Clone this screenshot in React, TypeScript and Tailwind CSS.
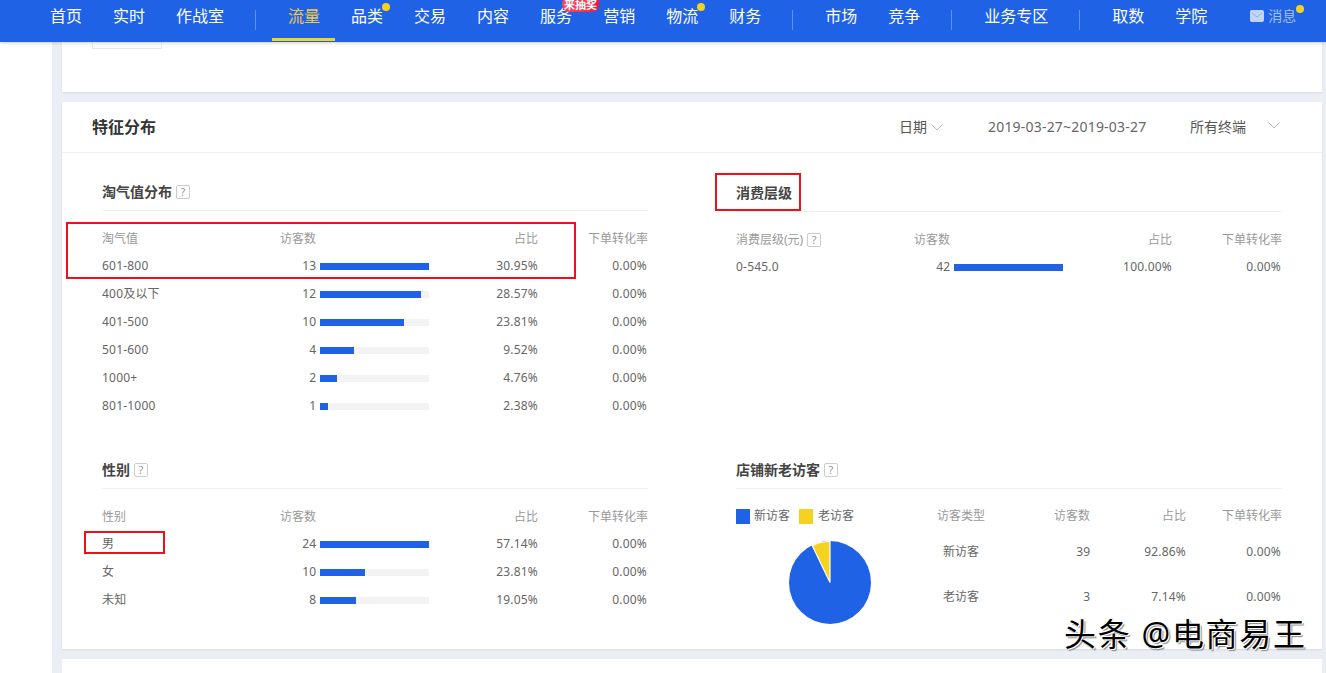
const navLeft = ["首页", "实时", "作战室"];

function Dot({ className }: { className: string }) {
  return <span className={`absolute h-2 w-2 rounded-full bg-[#f5d21f] ${className}`} />;
}

function Sep() {
  return <span className="mb-[2px] mr-px h-5 w-px bg-white/30" />;
}

function NavItem({ label, active, dot, children }: { label: string; active?: boolean; dot?: boolean; children?: React.ReactNode }) {
  return (
    <div className={`relative flex h-full items-center pb-[10px] text-base leading-none ${active ? "text-[#f3cb3c]" : "text-white"}`}>
      {label}
      {dot && <Dot className="-right-[7px] top-[3px]" />}
      {active && <span className="absolute -left-4 -right-[15px] bottom-px h-[3px] bg-[#f5d21f]" />}
      {children}
    </div>
  );
}

function Header() {
  return (
    <header className="relative z-10 flex h-[42px] shrink-0 items-center gap-[31px] bg-[#2062e6] pl-[50px] shadow-[0_1px_3px_rgba(0,0,0,0.2)]">
      {navLeft.map((n) => (
        <NavItem key={n} label={n} />
      ))}
      <Sep />
      <NavItem label="流量" active />
      <NavItem label="品类" dot />
      <NavItem label="交易" />
      <NavItem label="内容" />
      <NavItem label="服务">
        <span className="absolute -top-[3px] left-[22px] flex h-[15px] w-[37px] items-center justify-center rounded-b-[7px] rounded-tl-[7px] bg-gradient-to-r from-[#f5475a] to-[#ff0a3c] text-[11px] font-bold leading-none text-white">
          来抽奖
        </span>
      </NavItem>
      <NavItem label="营销" />
      <NavItem label="物流" dot />
      <NavItem label="财务" />
      <Sep />
      <NavItem label="市场" />
      <NavItem label="竞争" />
      <Sep />
      <NavItem label="业务专区" />
      <Sep />
      <NavItem label="取数" />
      <NavItem label="学院" />
      <div className="relative ml-[12px] flex h-full items-center gap-[4px] pb-[10px] text-sm leading-none text-white/60">
        <svg width="14" height="12" viewBox="0 0 14 12">
          <rect width="14" height="12" rx="2" fill="#c3d4f8" />
          <path d="M2 3l5 4 5-4" fill="none" stroke="#8fb0f2" strokeWidth="1" />
        </svg>
        消息
        <Dot className="-right-[8px] top-[5px]" />
      </div>
    </header>
  );
}

function Chevron() {
  return (
    <svg width="12" height="7" viewBox="0 0 12 7" fill="none" stroke="#bbb" strokeWidth="1">
      <path d="M0.5 0.5L6 6L11.5 0.5" />
    </svg>
  );
}

function Help() {
  return (
    <span className="ml-[4px] flex h-[14px] w-[14px] items-center justify-center rounded-[2px] border border-[#ccc] text-[11px] font-normal leading-none text-[#999]">
      ?
    </span>
  );
}

function SectionTitle({ title, help = true }: { title: string; help?: boolean }) {
  return (
    <div className="flex h-[38px] items-center border-b border-[#eee] text-sm font-bold text-[#444]">
      {title}
      {help && <Help />}
    </div>
  );
}

type Row = { name: string; count: number; pct: string };

function DataTable({ head, headHelp, rows }: { head: string; headHelp?: boolean; rows: Row[] }) {
  const max = Math.max(...rows.map((r) => r.count));
  return (
    <div className="pt-[14px] text-xs text-[#666]">
      <div className="flex h-[27px] items-center text-[#999]">
        <div className="flex w-[178px] items-center">
          {head}
          {headHelp && <Help />}
        </div>
        <div className="w-[36px] text-right">访客数</div>
        <div className="w-[222px] text-right">占比</div>
        <div className="w-[110px] text-right">下单转化率</div>
      </div>
      {rows.map((r) => (
        <div key={r.name} className="flex h-[28px] items-center">
          <div className="w-[178px] tracking-[0.2px]">{r.name}</div>
          <div className="w-[36px] text-right">{r.count}</div>
          <div className="ml-1 h-[7px] w-[109px] bg-[#f3f3f3]">
            <div className="h-full bg-[#2062e6]" style={{ width: `${(r.count / max) * 100}%` }} />
          </div>
          <div className="w-[109px] text-right tracking-[0.2px]">{r.pct}</div>
          <div className="w-[110px] pr-px text-right tracking-[0.2px]">0.00%</div>
        </div>
      ))}
    </div>
  );
}

function VisitorPie() {
  return (
    <svg width="82" height="83" viewBox="0 0 82 83">
      <ellipse cx="41" cy="41.5" rx="41" ry="41.5" fill="#2062e6" />
      <path d="M41 41.5L41 0.5A41 41 0 0 0 23.2 4.6Z" fill="#f5d21f" stroke="#fff" strokeWidth="1.2" />
    </svg>
  );
}

function VisitorTypes() {
  const rows = [
    { name: "新访客", count: 39, pct: "92.86%" },
    { name: "老访客", count: 3, pct: "7.14%" },
  ];
  return (
    <div className="flex pt-[13px] text-xs text-[#666]">
      <div className="w-[201px]">
        <div className="flex h-[28px] items-center">
          <span className="h-[15px] w-[14px] bg-[#2062e6]" />
          <span className="ml-[4px]">新访客</span>
          <span className="ml-[9px] h-[15px] w-[14px] bg-[#f5d21f]" />
          <span className="ml-[5px]">老访客</span>
        </div>
        <div className="mt-[11px] pl-[53px]">
          <VisitorPie />
        </div>
      </div>
      <div className="w-[345px]">
        <div className="flex h-[28px] items-center text-[#999]">
          <div className="w-[48px]">访客类型</div>
          <div className="w-[105px] text-right">访客数</div>
          <div className="w-[96px] text-right">占比</div>
          <div className="w-[96px] text-right">下单转化率</div>
        </div>
        <div className="-mt-px">
          {rows.map((r) => (
            <div key={r.name} className="flex h-[45px] items-center">
              <div className="w-[48px] text-center">{r.name}</div>
              <div className="w-[105px] text-right">{r.count}</div>
              <div className="w-[96px] text-right tracking-[0.2px]">{r.pct}</div>
              <div className="w-[96px] pr-px text-right tracking-[0.2px]">0.00%</div>
            </div>
          ))}
        </div>
      </div>
    </div>
  );
}

const taoqi: Row[] = [
  { name: "601-800", count: 13, pct: "30.95%" },
  { name: "400及以下", count: 12, pct: "28.57%" },
  { name: "401-500", count: 10, pct: "23.81%" },
  { name: "501-600", count: 4, pct: "9.52%" },
  { name: "1000+", count: 2, pct: "4.76%" },
  { name: "801-1000", count: 1, pct: "2.38%" },
];

const gender: Row[] = [
  { name: "男", count: 24, pct: "57.14%" },
  { name: "女", count: 10, pct: "23.81%" },
  { name: "未知", count: 8, pct: "19.05%" },
];

const level: Row[] = [{ name: "0-545.0", count: 42, pct: "100.00%" }];

// red annotation boxes drawn over the report
function Notes() {
  return (
    <>
      <div className="absolute left-[4px] top-[120px] h-[57px] w-[510px] border-2 border-[#f0101c]" />
      <div className="absolute left-[653px] top-[71px] h-[38px] w-[86px] border-2 border-[#f0101c]" />
      <div className="absolute left-[22px] top-[429px] h-[23px] w-[81px] border-2 border-[#f0101c]" />
    </>
  );
}

export default function App() {
  return (
    <div className="relative flex h-[673px] w-[1326px] flex-col overflow-hidden bg-white font-['Noto_Sans','Noto_Sans_CJK_SC',sans-serif]">
      <Header />
      <div className="flex min-h-0 flex-1">
        <aside className="w-[52px] shrink-0 bg-white" />
        <main className="flex flex-1 flex-col gap-[10px] bg-[#ebeef4] pl-[10px] pr-[4px]">
          <section className="h-[50px] shrink-0 bg-white pl-[30px] shadow-[0_1px_2px_rgba(0,0,0,0.08)]">
            <div className="h-[7px] w-[70px] border-x border-b border-[#e8e8e8]" />
          </section>
          <section className="relative h-[547px] shrink-0 bg-white shadow-[0_1px_2px_rgba(0,0,0,0.08)]">
            <div className="flex h-[51px] items-center border-b border-[#eee] pl-[30px] pr-[42px] text-sm text-[#555]">
              <h2 className="text-base font-bold text-[#333]">特征分布</h2>
              <div className="ml-auto flex items-center">
                <span>日期</span>
                <span className="ml-[4px]"><Chevron /></span>
                <span className="ml-[45px] w-[158px] whitespace-nowrap tracking-[0.2px] text-[#666]">2019-03-27~2019-03-27</span>
                <span className="ml-[44px]">所有终端</span>
                <span className="mb-[3px] ml-[22px]"><Chevron /></span>
              </div>
            </div>
            <div className="grid grid-cols-[546px_546px] gap-x-[88px] pl-[40px] pt-[20px]">
              <div className="h-[278px]">
                <SectionTitle title="淘气值分布" />
                <DataTable head="淘气值" rows={taoqi} />
              </div>
              <div className="h-[278px] pt-px">
                <SectionTitle title="消费层级" help={false} />
                <DataTable head="消费层级(元)" headHelp rows={level} />
              </div>
              <div>
                <SectionTitle title="性别" />
                <DataTable head="性别" rows={gender} />
              </div>
              <div>
                <SectionTitle title="店铺新老访客" />
                <VisitorTypes />
              </div>
            </div>
            <Notes />
          </section>
          <section className="h-[40px] shrink-0 bg-white" />
        </main>
      </div>
      <div className="absolute left-[1064px] top-[614px] whitespace-nowrap text-[32px] leading-[40px] tracking-[1.7px] text-black [text-shadow:1px_1px_0_#fff,-1px_-1px_0_#fff,2px_2px_1px_#888]">
        头条 @电商易王
      </div>
    </div>
  );
}
